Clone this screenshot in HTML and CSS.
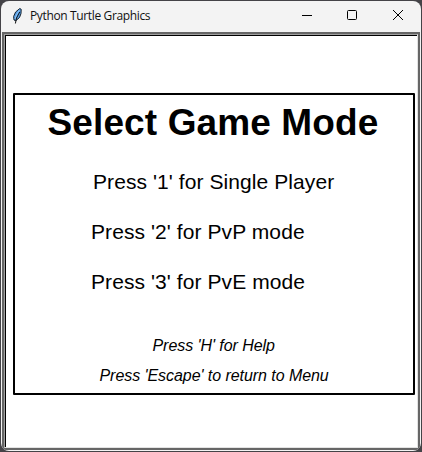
FILE: index.html
```
<!DOCTYPE html>
<html lang="en">
<head>
<meta charset="utf-8">
<title>Python Turtle Graphics</title>
<link rel="stylesheet" href="styles.css">
</head>
<body>
<div class="window">
  <header class="titlebar">
    <svg class="feather" width="12" height="18" viewBox="0 0 12 18">
      <path d="M8.8 1.5 10.2 2.3 10 6.5 8.5 10.5 4.8 13.7 3 13 2.6 9.5 4.6 5Z" fill="#549be0" stroke="#17222d"/>
      <path d="M8.3 3 5.5 8 4 12" fill="none" stroke="#8cc5fb"/>
      <path d="M8.7 5 5.5 11 4.4 16.5" fill="none" stroke="#111"/>
    </svg>
    <span class="caption">Python Turtle Graphics</span>
    <svg class="controls" width="104" height="12" viewBox="0 0 104 12" fill="none" stroke="#000" stroke-width="1">
      <path d="M0 6.5H10"/>
      <rect x="45.5" y="1.5" width="9" height="9" rx="1"/>
      <path d="M91 1 101 11M101 1 91 11"/>
    </svg>
  </header>
  <main class="frame">
    <div class="canvas">
      <section class="panel">
        <h1 class="heading">Select Game Mode</h1>
        <p class="option single">Press '1' for Single Player</p>
        <p class="option">Press '2' for PvP mode</p>
        <p class="option">Press '3' for PvE mode</p>
        <p class="hint first">Press 'H' for Help</p>
        <p class="hint escape">Press 'Escape' to return to Menu</p>
      </section>
    </div>
  </main>
</div>
</body>
</html>
```
FILE: styles.css
```
* { box-sizing: border-box; }
body {
  margin: 0;
  width: 422px;
  height: 452px;
  padding: 1px;
  overflow: hidden;
  background: #444347;
}
.window {
  width: 420px;
  height: 450px;
  border-radius: 8px;
  overflow: hidden;
  background: #f3f3f3;
}
.titlebar {
  display: flex;
  align-items: center;
  height: 31px;
  padding: 0 15px 2px 10px;
}
.feather { margin-right: 7px; }
.caption {
  font: 12px/16px "Open Sans", "Noto Sans", sans-serif;
  letter-spacing: -0.36px;
  color: #111;
  white-space: nowrap;
}
.controls {
  margin-left: auto;
  margin-bottom: 1px;
}
.frame {
  height: 418px;
  margin: 0 1px;
  border: 2px solid #666;
  border-radius: 0 0 4px 4px;
}
.canvas {
  height: 414px;
  padding: 58px 0 0 8px;
  background: #fff;
  border: 1px solid #e3e3e3;
  border-top-color: #a0a0a0;
  border-left-color: #a0a0a0;
  box-shadow: inset 1px 1px 0 #000;
}
.panel {
  width: 402px;
  height: 302px;
  border: 2px solid #000;
  border-radius: 1px;
  font-family: "Liberation Sans", Arial, sans-serif;
  color: #000;
  white-space: nowrap;
}
.heading {
  margin: 6px 0 0 32.5px;
  font-size: 37px;
  line-height: 44px;
  font-weight: 700;
  letter-spacing: 0.12px;
}
.option {
  margin: 0 0 26px 76px;
  font-size: 21px;
  line-height: 24px;
  letter-spacing: 0.08px;
}
.option.single { margin-top: 25px; margin-left: 78px; }
.hint {
  margin: 0;
  font-size: 16px;
  line-height: 30px;
  font-style: italic;
  letter-spacing: -0.06px;
}
.hint.first { margin: 37px 0 0 137.5px; }
.hint.escape { margin-left: 84.5px; }
```
